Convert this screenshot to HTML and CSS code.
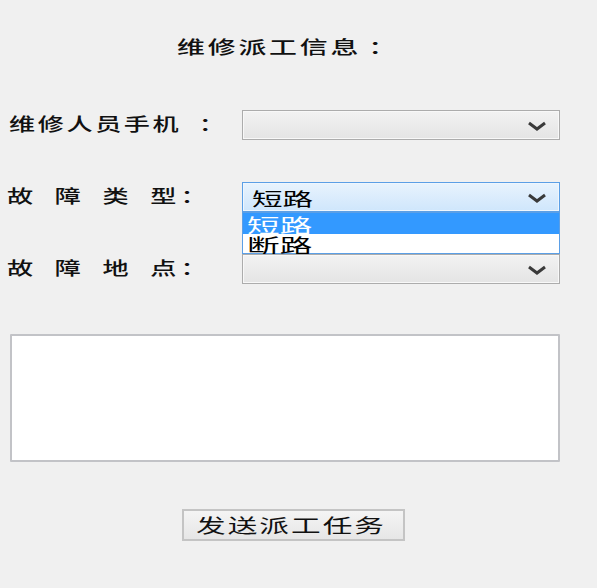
FILE: index.html
```html
<!DOCTYPE html>
<html lang="zh-CN">
<head>
<meta charset="utf-8">
<title>维修派工信息</title>
<link rel="stylesheet" href="styles.css">
</head>
<body>
<div class="form">
  <div class="title"><span class="stretch wide">维修派工信息<span class="colon">：</span></span></div>

  <div class="row first">
    <div class="label"><span class="stretch">维修人员手机<span class="colon">：</span></span></div>
    <div class="select">
      <span class="value"></span>
      <svg class="chev" width="20" height="10" viewBox="0 0 20 10"><polyline points="2,2 10,8 18,2" fill="none" stroke="#3a3a3a" stroke-width="3"/></svg>
    </div>
  </div>

  <div class="row">
    <div class="label"><span class="stretch spaced">故 障 类 型<span class="colon near">：</span></span></div>
    <div class="select focused">
      <span class="value"><span class="stretch-v">短路</span></span>
      <svg class="chev" width="20" height="10" viewBox="0 0 20 10"><polyline points="2,2 10,8 18,2" fill="none" stroke="#3a3a3a" stroke-width="3"/></svg>
      <ul class="list">
        <li class="opt active"><span class="stretch-o">短路</span></li>
        <li class="opt"><span class="stretch-o">断路</span></li>
      </ul>
    </div>
  </div>

  <div class="row">
    <div class="label"><span class="stretch spaced">故 障 地 点<span class="colon near">：</span></span></div>
    <div class="select">
      <span class="value"></span>
      <svg class="chev" width="20" height="10" viewBox="0 0 20 10"><polyline points="2,2 10,8 18,2" fill="none" stroke="#3a3a3a" stroke-width="3"/></svg>
    </div>
  </div>

  <textarea class="notes"></textarea>

  <div class="actions">
    <button class="btn" type="button"><span class="stretch-b">发送派工任务</span></button>
  </div>
</div>
</body>
</html>
```

FILE: styles.css
```css
html, body {
  margin: 0;
  padding: 0;
  background: #f0f0f0;
}

body {
  width: 597px;
  height: 588px;
  overflow: hidden;
  font-family: "Noto Sans CJK SC", "Noto Sans", sans-serif;
  color: #111;
}

.form {
  display: flex;
  flex-direction: column;
  padding-top: 34px;
}

.stretch {
  display: inline-block;
  font-size: 18px;
  font-weight: 500;
  line-height: 24px;
  letter-spacing: 1.8px;
  white-space: pre;
  transform: scaleX(1.45);
  transform-origin: left center;
}

.stretch.wide {
  transform: scaleX(1.55);
}

.stretch.wide .colon {
  margin-left: 4.5px;
}

.stretch.spaced {
  word-spacing: 7.3px;
  margin-left: -2px;
}

.colon {
  margin-left: 12px;
}

.colon.near {
  margin-left: 1px;
}

.stretch-v {
  display: inline-block;
  font-size: 18px;
  line-height: 20px;
  white-space: pre;
  transform: scaleX(1.7);
  transform-origin: left center;
}

.stretch-o {
  display: inline-block;
  font-size: 19px;
  line-height: 19px;
  white-space: pre;
  transform: scaleX(1.72);
  transform-origin: left center;
}

.stretch-b {
  display: inline-block;
  font-size: 19px;
  line-height: 24px;
  letter-spacing: 1.3px;
  white-space: pre;
  transform: scaleX(1.56);
  transform-origin: left center;
}

.title {
  height: 24px;
  padding-left: 177px;
}

.row {
  display: flex;
  align-items: center;
  height: 30px;
  margin-top: 42px;
}

.row.first {
  margin-top: 52px;
}

.label {
  width: 242px;
  flex: none;
  padding-left: 9px;
  box-sizing: border-box;
  margin-top: -4px;
}

.select {
  position: relative;
  width: 318px;
  height: 30px;
  flex: none;
  box-sizing: border-box;
  border: 1px solid #acacac;
  background: linear-gradient(#f2f2f2, #e4e4e4);
  box-shadow: inset 0 0 0 1px #f8f8f8;
  display: flex;
  align-items: center;
  justify-content: space-between;
  padding: 0 12px 0 9px;
}

.select.focused {
  border-color: #5b9fe6;
  background: linear-gradient(#e8f3fd, #cfe6fc);
  box-shadow: inset 0 0 0 1px #eef6fe;
}

.value {
  display: block;
  height: 20px;
  color: #000;
}

.chev {
  display: block;
  margin-top: 2px;
}

.list {
  position: absolute;
  left: -1px;
  top: 29px;
  width: 318px;
  box-sizing: border-box;
  margin: 0;
  padding: 0;
  list-style: none;
  background: #fff;
  border: 1px solid #5b9fe6;
}

.opt {
  height: 19px;
  padding-left: 4px;
  color: #000;
}

.opt.active {
  height: 21px;
  background: #3399ff;
  color: #fff;
}

.opt.active .stretch-o {
  line-height: 24px;
}

.notes {
  display: block;
  width: 550px;
  height: 128px;
  margin: 50px 0 0 10px;
  box-sizing: border-box;
  border: 2px solid #c2c3c7;
  border-radius: 1px;
  background: #fff;
  resize: none;
  outline: none;
}

.actions {
  margin-top: 47px;
  padding-left: 182px;
}

.btn {
  width: 223px;
  height: 32px;
  box-sizing: border-box;
  padding: 0 0 0 12px;
  margin: 0;
  border: 2px solid #c4c4c4;
  background: linear-gradient(#f4f4f4, #e6e6e6);
  color: #111;
  font-family: "Noto Sans CJK SC", "Noto Sans", sans-serif;
  text-align: left;
  display: flex;
  align-items: center;
}
```
